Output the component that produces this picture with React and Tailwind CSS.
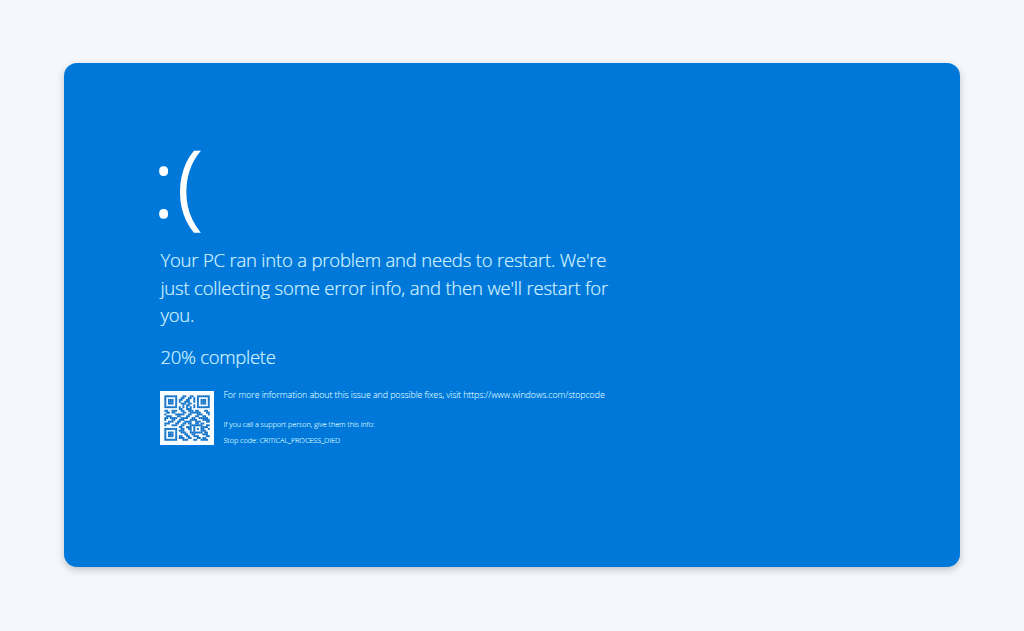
const QR_ROWS = [
  '1111111000110011001111111',
  '1000001001100110101000001',
  '1011101011001100101011101',
  '1011101010011100101011101',
  '1011101001110110001011101',
  '1000001000101100101000001',
  '1111111010101010101111111',
  '0000000011001110000000000',
  '1100111001100111011000110',
  '0110110000110011111100011',
  '1000001111100110001110001',
  '0111000110001100011001100',
  '1101111001111001100111110',
  '1000110011100011110001111',
  '0011100110011110011100011',
  '1110001100110110011011000',
  '1000111001100011111110011',
  '0000000011001110100011110',
  '1111111001100110101011001',
  '1000001011100010100011100',
  '1011101001110011111110110',
  '1011101000011001100001110',
  '1011101011001100111000011',
  '1000001011100110001101100',
  '1111111000111000110011110',
];

function QrCode() {
  return (
    <svg
      viewBox="-2.4 -2.4 29.8 29.8"
      className="h-[54px] w-[54px] shrink-0 bg-[#f6fcff]"
      role="img"
    >
      {QR_ROWS.map((row, y) =>
        [...row].map((cell, x) =>
          cell === '1' ? (
            <rect key={`${x}-${y}`} x={x} y={y} width="1.06" height="1.06" fill="#1272c8" />
          ) : null
        )
      )}
    </svg>
  );
}

export default function App() {
  return (
    <div className="h-[631px] bg-[#f4f7fb] px-16 pt-[63px] font-['Open_Sans','Noto_Sans',sans-serif]">
      <main className="h-[504px] w-full overflow-hidden rounded-[13px] bg-[#0078da] pl-[96.4px] pt-[60px] text-[#d5f3ff] shadow-[0_3px_7px_rgba(40,50,65,0.25)]">
        <h1 className="-mt-[3px] -ml-2 h-[126px] text-[93px] leading-[123px] font-light tracking-[2.5px] text-white [-webkit-text-stroke:1.6px_white]">
          :(
        </h1>

        <div className="text-[18.5px] leading-[27.7px] font-light tracking-[-0.2px] [-webkit-text-stroke:0.2px]">
          <p className="whitespace-nowrap">
            Your PC ran into a problem and needs to restart. We're
            <br />
            just collecting some error info, and then we'll restart for
            <br />
            you.
          </p>
          <p className="mt-[14px] tracking-[-0.28px]">20% complete</p>
        </div>

        {/* Support details */}
        <div className="mt-5 flex gap-[9px] font-light whitespace-nowrap">
          <QrCode />
          <div>
            <p className="text-[8.9px] leading-[8px] tracking-[-0.09px] [-webkit-text-stroke:0.1px]">
              For more information about this issue and possible fixes, visit https://www.windows.com/stopcode
            </p>
            <div className="mt-[17px] text-[7.3px] leading-4 tracking-[-0.06px] [-webkit-text-stroke:0.1px]">
              <p>If you call a support person, give them this info:</p>
              <p>Stop code: CRITICAL_PROCESS_DIED</p>
            </div>
          </div>
        </div>
      </main>
    </div>
  );
}
